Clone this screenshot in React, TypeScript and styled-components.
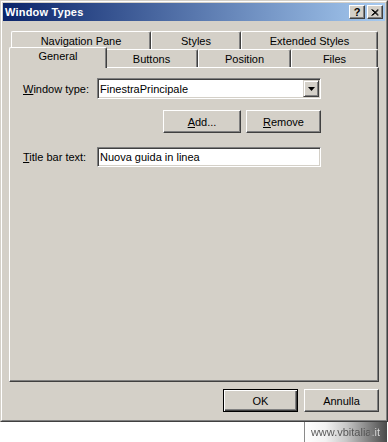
import React from "react";
import styled, { createGlobalStyle, css } from "styled-components";

const Global = createGlobalStyle`
  html, body { margin: 0; padding: 0; background: #fff; }
  body { font-family: "Liberation Sans", Arial, sans-serif; font-size: 11px; color: #000; }
  #root { width: 388px; }
`;

const Page = styled.div`
  display: flex;
  flex-direction: column;
  width: 388px;
  height: 442px;
`;

const Dialog = styled.div`
  box-sizing: border-box;
  width: 388px;
  height: 422px;
  flex: none;
  border: 1px solid;
  border-color: #d4d0c8 #404040 #404040 #d4d0c8;
  background: #d4d0c8;
`;

const DialogInner = styled.div`
  box-sizing: border-box;
  height: 100%;
  border: 1px solid;
  border-color: #fff #808080 #808080 #fff;
  padding: 1px;
  display: flex;
  flex-direction: column;
`;

const TitleBar = styled.div`
  height: 18px;
  flex: none;
  display: flex;
  align-items: center;
  justify-content: space-between;
  background: linear-gradient(to right, #0a246a, #a6caf0);
  padding: 0 2px;
`;

const Title = styled.span`
  color: #fff;
  font-weight: bold;
  font-size: 11px;
  letter-spacing: 0.2px;
`;

const CaptionButtons = styled.div`
  display: flex;
  gap: 2px;
`;

const CaptionButton = styled.div`
  box-sizing: border-box;
  width: 16px;
  height: 14px;
  background: #d4d0c8;
  border: 1px solid;
  border-color: #fff #404040 #404040 #fff;
  box-shadow: inset -1px -1px #808080;
  display: flex;
  align-items: center;
  justify-content: center;
  font-weight: bold;
  font-size: 11px;
  line-height: 11px;
  color: #000;
`;

const Client = styled.div`
  flex: 1;
  display: flex;
  flex-direction: column;
  padding: 10px 6px 7px;
`;

const TabRow = styled.div`
  display: flex;
  height: 18px;
  flex: none;
  padding: 0 2px;
  align-items: flex-start;
`;

const Tab = styled.div<{ $w: number; $active?: boolean }>`
  box-sizing: border-box;
  flex: none;
  width: ${(p) => p.$w}px;
  height: 18px;
  border-top: 1px solid #fff;
  border-left: 1px solid #fff;
  border-right: 1px solid #404040;
  box-shadow: inset -1px 0 #808080;
  border-top-left-radius: 2px;
  border-top-right-radius: 2px;
  background: #d4d0c8;
  text-align: center;
  line-height: 13px;
  padding-top: 3px;
  white-space: nowrap;
  ${(p) =>
    p.$active &&
    css`
      position: relative;
      z-index: 1;
      width: ${p.$w + 4}px;
      margin: -2px -2px 0;
      height: 21px;
      padding-top: 2px;
    `}
`;

const Panel = styled.div`
  box-sizing: border-box;
  height: 315px;
  flex: none;
  border: 1px solid;
  border-color: #fff #404040 #404040 #fff;
  box-shadow: inset -1px -1px #808080;
  padding: 10px 0 0 13px;
  display: flex;
  flex-direction: column;
`;

const FieldRow = styled.div<{ $mt?: number }>`
  display: flex;
  align-items: center;
  margin-top: ${(p) => p.$mt ?? 0}px;
`;

const Label = styled.span`
  width: 74px;
  flex: none;
  white-space: nowrap;
`;

const Sunken = styled.div<{ $h: number }>`
  box-sizing: border-box;
  width: 224px;
  height: ${(p) => p.$h}px;
  background: #fff;
  border: 1px solid;
  border-color: #808080 #fff #fff #808080;
  box-shadow: inset 1px 1px #404040, inset -1px -1px #d4d0c8;
  display: flex;
  align-items: center;
  padding: 1px 1px 1px 2px;
`;

const FieldText = styled.span`
  flex: 1;
  white-space: nowrap;
`;

const DropButton = styled.div`
  box-sizing: border-box;
  width: 16px;
  height: 17px;
  flex: none;
  background: #d4d0c8;
  border: 1px solid;
  border-color: #d4d0c8 #404040 #404040 #d4d0c8;
  box-shadow: inset 1px 1px #fff, inset -1px -1px #808080;
  display: flex;
  align-items: center;
  justify-content: center;
`;

const ButtonRow = styled.div<{ $mt: number; $w?: number; $gap: number }>`
  display: flex;
  justify-content: flex-end;
  gap: ${(p) => p.$gap}px;
  margin-top: ${(p) => p.$mt}px;
  ${(p) => p.$w && css`width: ${p.$w}px;`}
`;

const PushButton = styled.button<{ $w: number; $default?: boolean }>`
  box-sizing: border-box;
  width: ${(p) => p.$w}px;
  height: 23px;
  flex: none;
  background: #d4d0c8;
  font-family: "Liberation Sans", Arial, sans-serif;
  font-size: 11px;
  color: #000;
  padding: 0;
  border: 1px solid;
  border-color: #fff #404040 #404040 #fff;
  box-shadow: inset -1px -1px #808080;
  ${(p) =>
    p.$default &&
    css`
      border-color: #000;
      box-shadow: inset 1px 1px #fff, inset -1px -1px #404040, inset -2px -2px #808080;
    `}
`;

const Footer = styled.div`
  display: flex;
  justify-content: flex-end;
  height: 20px;
  padding-right: 1px;
`;

const Watermark = styled.div`
  box-sizing: border-box;
  width: 83px;
  background: linear-gradient(to right, #ffffff, #f2f2f2 25%, #c8c8c8 50%, #4a4a4a);
  border-left: 1px solid #8a8a8a;
  display: flex;
  align-items: center;
  justify-content: flex-end;
  padding-right: 7px;
  font-size: 11px;
`;

const WatermarkText = styled.span`
  background: linear-gradient(to right, #555, #505050 84%, #d8d8d8 91%, #e0e0e0);
  -webkit-background-clip: text;
  background-clip: text;
  color: transparent;
  white-space: nowrap;
`;

export default function App() {
  return (
    <Page>
      <Global />
      <Dialog>
        <DialogInner>
          <TitleBar>
            <Title>Window Types</Title>
            <CaptionButtons>
              <CaptionButton>?</CaptionButton>
              <CaptionButton>
                <svg width="8" height="7" viewBox="0 0 8 7">
                  <path d="M0.5 0.5 L7 6.5 M1.5 0.5 L7.5 6 M7 0.5 L0.5 6.5 M7.5 1 L1.5 6.5" stroke="#000" strokeWidth="1" fill="none" />
                </svg>
              </CaptionButton>
            </CaptionButtons>
          </TitleBar>
          <Client>
            <TabRow>
              <Tab $w={140}>Navigation Pane</Tab>
              <Tab $w={90}>Styles</Tab>
              <Tab $w={137}>Extended Styles</Tab>
            </TabRow>
            <TabRow>
              <Tab $w={94} $active>General</Tab>
              <Tab $w={93}>Buttons</Tab>
              <Tab $w={93}>Position</Tab>
              <Tab $w={87}>Files</Tab>
            </TabRow>
            <Panel>
              <FieldRow>
                <Label>
                  <u>W</u>indow type:
                </Label>
                <Sunken $h={21}>
                  <FieldText>FinestraPrincipale</FieldText>
                  <DropButton>
                    <svg width="7" height="4" viewBox="0 0 7 4">
                      <path d="M0 0 H7 L3.5 4 Z" fill="#000" />
                    </svg>
                  </DropButton>
                </Sunken>
              </FieldRow>
              <ButtonRow $mt={11} $w={298} $gap={5}>
                <PushButton $w={78}>
                  <u>A</u>dd...
                </PushButton>
                <PushButton $w={75}>
                  <u>R</u>emove
                </PushButton>
              </ButtonRow>
              <FieldRow $mt={14}>
                <Label>
                  <u>T</u>itle bar text:
                </Label>
                <Sunken $h={20}>
                  <FieldText>Nuova guida in linea</FieldText>
                </Sunken>
              </FieldRow>
            </Panel>
            <ButtonRow $mt={7} $gap={6}>
              <PushButton $w={75} $default>
                OK
              </PushButton>
              <PushButton $w={75}>Annulla</PushButton>
            </ButtonRow>
          </Client>
        </DialogInner>
      </Dialog>
      <Footer>
        <Watermark>
          <WatermarkText>www.vbitalia.it</WatermarkText>
        </Watermark>
      </Footer>
    </Page>
  );
}
